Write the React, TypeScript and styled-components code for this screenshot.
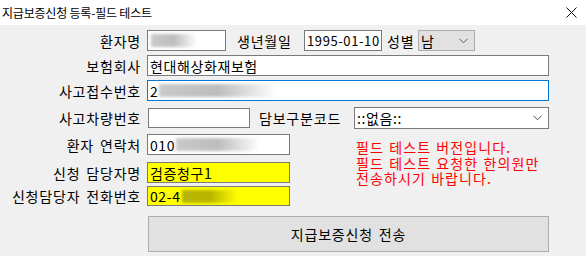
import styled, { createGlobalStyle } from "styled-components";

const GlobalStyle = createGlobalStyle`
  html, body {
    margin: 0;
    padding: 0;
    background: #f0f0f0;
  }
  body {
    font-family: "Noto Sans CJK KR", "Noto Sans", sans-serif;
    color: #000;
  }
`;

const Window = styled.div`
  width: 586px;
  height: 256px;
  background: #f0f0f0;
  overflow: hidden;
  display: flex;
  flex-direction: column;
`;

const TitleBar = styled.div`
  height: 25px;
  flex: none;
  background: #fff;
  display: flex;
  align-items: center;
  justify-content: space-between;
  padding: 0 9px 1px 2px;
  box-sizing: border-box;
  font-size: 12px;
  letter-spacing: -0.2px;
`;

const Form = styled.div`
  padding-top: 5px;
  display: flex;
  flex-direction: column;
`;

const Row = styled.div<{ $h: number; $mt?: number }>`
  display: flex;
  align-items: center;
  height: ${(p) => p.$h}px;
  margin-top: ${(p) => p.$mt ?? 0}px;
`;

const Label = styled.div<{ $w?: number; $pl?: number; $mr?: number }>`
  width: ${(p) => p.$w ?? 141}px;
  padding-left: ${(p) => p.$pl ?? 0}px;
  margin-right: ${(p) => p.$mr ?? 6}px;
  box-sizing: border-box;
  flex: none;
  text-align: ${(p) => (p.$pl !== undefined ? "left" : "right")};
  font-size: 14px;
  letter-spacing: 0.8px;
  word-spacing: 2px;
  line-height: 16px;
  white-space: nowrap;
`;

const Box = styled.div<{
  $w: number;
  $h?: number;
  $bg?: string;
  $focus?: boolean;
  $fs?: number;
}>`
  width: ${(p) => p.$w}px;
  height: ${(p) => p.$h ?? 21}px;
  flex: none;
  box-sizing: border-box;
  background: ${(p) => p.$bg ?? "#fff"};
  border: 1px solid ${(p) => (p.$focus ? "#0078d7" : "#7a7a7a")};
  display: flex;
  align-items: center;
  padding-left: 2px;
  font-size: ${(p) => p.$fs ?? 14}px;
  letter-spacing: 0.6px;
  line-height: 16px;
  white-space: nowrap;
  overflow: hidden;
`;

const Select = styled.div<{ $w: number; $h?: number; $flat?: boolean }>`
  width: ${(p) => p.$w}px;
  height: ${(p) => p.$h ?? 21}px;
  flex: none;
  box-sizing: border-box;
  background: ${(p) => (p.$flat ? "#e1e1e1" : "#fff")};
  border: 1px solid ${(p) => (p.$flat ? "#adadad" : "#7a7a7a")};
  display: flex;
  align-items: center;
  justify-content: space-between;
  padding: 0 6px 0 2px;
  font-size: 14px;
  letter-spacing: 0.6px;
  line-height: 16px;
`;

const Blur = styled.span<{ $w: number; $tone?: string }>`
  display: inline-block;
  width: ${(p) => p.$w}px;
  height: 13px;
  margin-left: 1px;
  background: linear-gradient(
    90deg,
    ${(p) => p.$tone ?? "#c9c9c9"} 0%,
    ${(p) => p.$tone ?? "#bdbdbd"} 50%,
    rgba(200, 200, 200, 0) 100%
  );
  filter: blur(1.5px);
`;

const Lower = styled.div`
  display: flex;
`;

const LeftCol = styled.div`
  display: flex;
  flex-direction: column;
  width: 290px;
  flex: none;
`;

const Notice = styled.div`
  margin-left: 66px;
  padding-top: 11px;
  display: flex;
  flex-direction: column;
  flex: none;
`;

const NoticeLine = styled.div`
  color: #ff0000;
  font-size: 14px;
  letter-spacing: 1.1px;
  word-spacing: 1px;
  line-height: 15.5px;
  height: 15.5px;
  white-space: nowrap;
`;

const SubmitButton = styled.button`
  margin: 10px 0 0 148px;
  width: 401px;
  height: 36px;
  box-sizing: border-box;
  background: #e1e1e1;
  border: 1px solid #adadad;
  font-family: inherit;
  font-size: 14px;
  letter-spacing: 0.8px;
  word-spacing: 2px;
  color: #000;
  padding: 0;
`;

const Chevron = () => (
  <svg width="9" height="6" viewBox="0 0 9 6">
    <path d="M0.5 0.8 L4.5 4.8 L8.5 0.8" fill="none" stroke="#555" strokeWidth="1" />
  </svg>
);

const CloseIcon = () => (
  <svg width="11" height="11" viewBox="0 0 11 11">
    <path d="M0.5 0.5 L10.5 10.5 M10.5 0.5 L0.5 10.5" stroke="#111" strokeWidth="1" />
  </svg>
);

const notice = [
  "필드 테스트 버전입니다.",
  "필드 테스트 요청한 한의원만",
  "전송하시기 바랍니다.",
];

export default function App() {
  return (
    <>
      <GlobalStyle />
      <Window>
        <TitleBar>
          <span>지급보증신청 등록-필드 테스트</span>
          <CloseIcon />
        </TitleBar>
        <Form>
          <Row $h={21}>
            <Label>환자명</Label>
            <Box $w={79}>
              <Blur $w={46} />
            </Box>
            <Label $w={78} $pl={11} $mr={0}>
              생년월일
            </Label>
            <Box $w={78} $fs={13}>
              1995-01-10
            </Box>
            <Label $w={36} $pl={5} $mr={0}>
              성별
            </Label>
            <Select $w={57} $flat>
              <span>남</span>
              <Chevron />
            </Select>
          </Row>
          <Row $h={21} $mt={4}>
            <Label>보험회사</Label>
            <Box $w={402}>현대해상화재보험</Box>
          </Row>
          <Row $h={21} $mt={4}>
            <Label>사고접수번호</Label>
            <Box $w={402} $focus>
              2<Blur $w={118} />
            </Box>
          </Row>
          <Row $h={22} $mt={6}>
            <Label $mr={7}>사고차량번호</Label>
            <Box $w={102} $h={20}></Box>
            <Label $w={104} $pl={9} $mr={0}>
              담보구분코드
            </Label>
            <Select $w={195} $h={22}>
              <span>::없음::</span>
              <Chevron />
            </Select>
          </Row>
          <Lower>
            <LeftCol>
              <Row $h={21} $mt={5}>
                <Label>환자 연락처</Label>
                <Box $w={143}>
                  010<Blur $w={84} />
                </Box>
              </Row>
              <Row $h={21} $mt={7}>
                <Label>신청 담당자명</Label>
                <Box $w={143} $bg="#ffff00">
                  검증청구1
                </Box>
              </Row>
              <Row $h={20} $mt={3}>
                <Label>신청담당자 전화번호</Label>
                <Box $w={143} $h={20} $bg="#ffff00">
                  02-4<Blur $w={56} $tone="#b8b400" />
                </Box>
              </Row>
            </LeftCol>
            <Notice>
              {notice.map((line) => (
                <NoticeLine key={line}>{line}</NoticeLine>
              ))}
            </Notice>
          </Lower>
          <SubmitButton>지급보증신청 전송</SubmitButton>
        </Form>
      </Window>
    </>
  );
}
